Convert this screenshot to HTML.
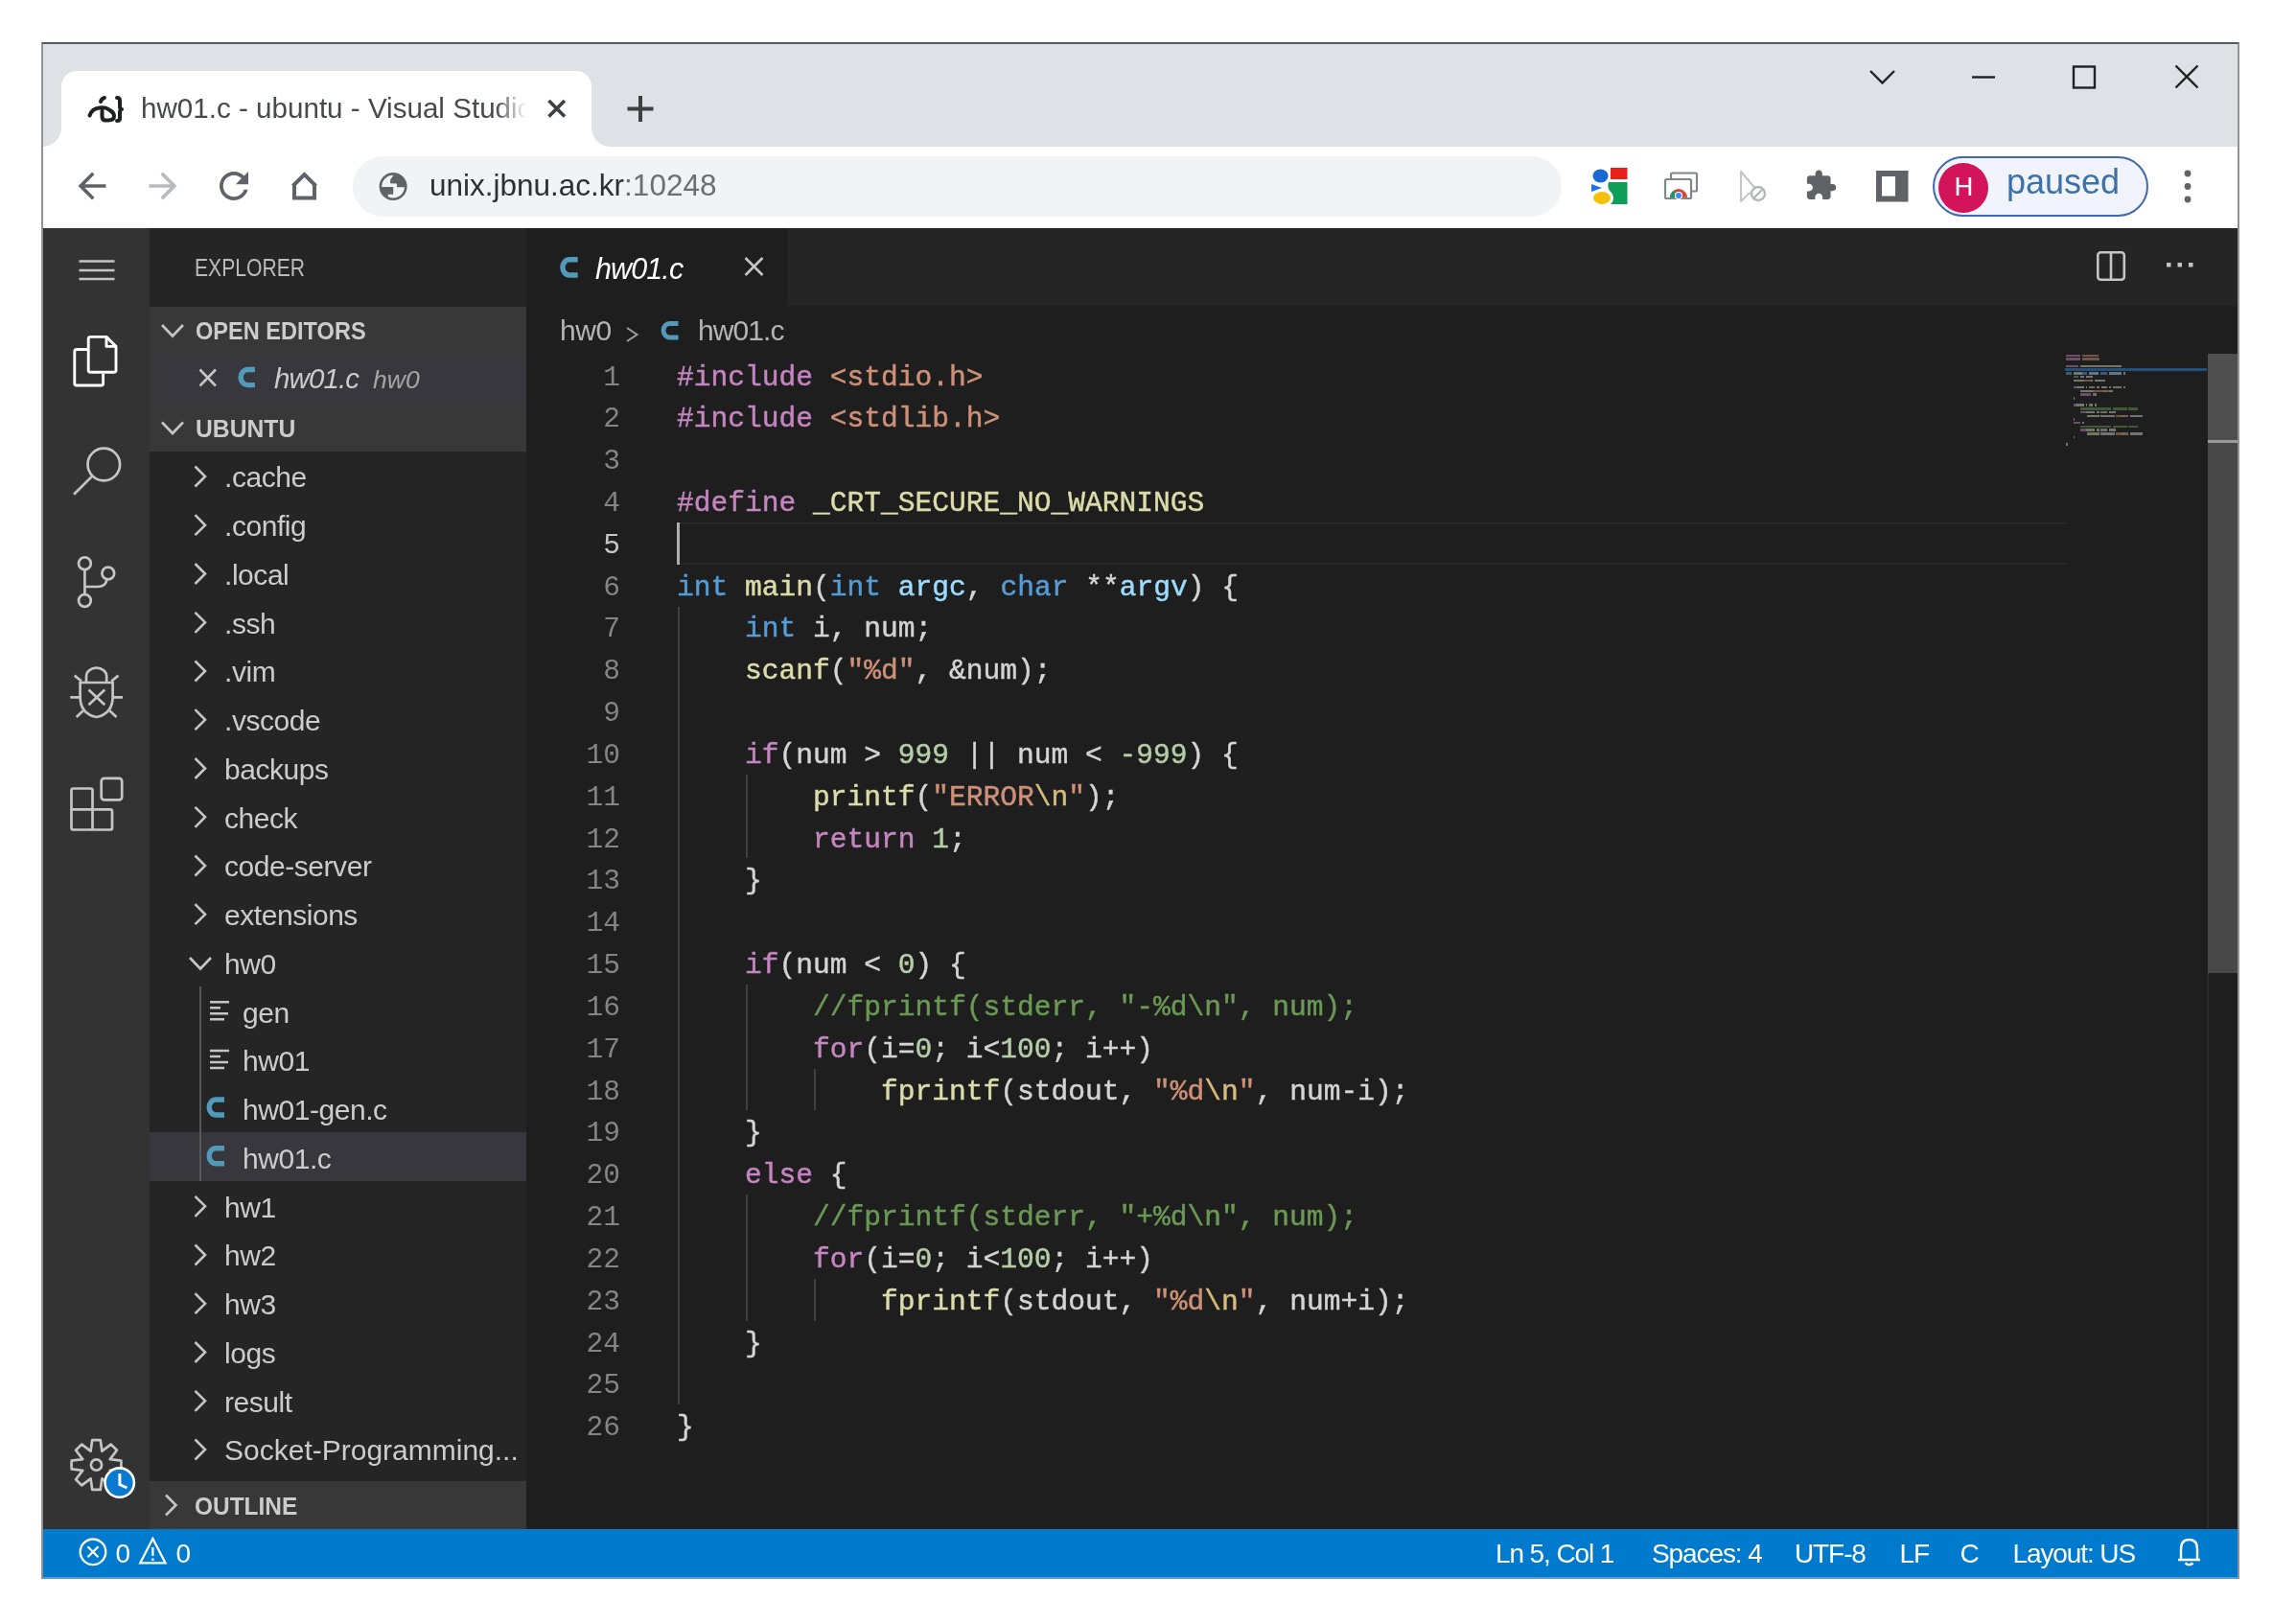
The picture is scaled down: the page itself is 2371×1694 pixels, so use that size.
<!DOCTYPE html>
<html><head><meta charset="utf-8">
<style>
*{box-sizing:border-box;margin:0;padding:0}
html,body{width:2371px;height:1694px;overflow:hidden;background:#fff;font-family:"Liberation Sans",sans-serif}
.a{position:absolute}
#win{position:absolute;left:43px;top:44px;width:2293px;height:1603px;border:2px solid;border-color:#56595d #909294 #5a9ad0 #909294;background:#dee1e6;overflow:hidden}
#blur{position:absolute;left:0;top:0;width:2371px;height:1694px;filter:blur(0.6px)}
/* positions inside are page coords: use wrapper with offset */
#pg{position:absolute;left:-45px;top:-46px;width:2371px;height:1694px}
.t{white-space:pre;line-height:1}
svg{position:absolute;overflow:visible}
</style></head><body>
<div id="blur"><div id="win"><div id="pg">
  <!-- Chrome tab strip -->
  <div class="a" style="left:45px;top:46px;width:2290px;height:107px;background:#dee1e6"></div>
  <!-- active tab -->
  <div class="a" style="left:64px;top:74px;width:553px;height:80px;background:#fff;border-radius:16px 16px 0 0"></div>
  <!-- toolbar -->
  <div class="a" style="left:45px;top:153px;width:2290px;height:85px;background:#fff"></div>
  <!-- omnibox -->
  <div class="a" style="left:368px;top:163px;width:1261px;height:63px;background:#f1f3f4;border-radius:32px"></div>


  <!-- tab bottom flares -->
  <div class="a" style="left:44px;top:133px;width:20px;height:20px;background:radial-gradient(circle at 0 0,#dee1e6 19.5px,#fff 20.5px)"></div>
  <div class="a" style="left:617px;top:133px;width:20px;height:20px;background:radial-gradient(circle at 100% 0,#dee1e6 19.5px,#fff 20.5px)"></div>
  <!-- favicon -->
  <svg style="left:0;top:0" width="1" height="1"><g fill="none" stroke="#1f2023" stroke-width="4" stroke-linecap="round" stroke-linejoin="round">
    <path d="M93.5 120.5 C95 116 99 113 103.5 112.5 C107 112 110 111.5 113 114 C116.5 116 119 117.5 119 121 C119 124.5 116.5 125.5 113 125.5 L110 125.5 C107.5 125.5 106.5 124 106.5 121.5 L106.5 116"/>
    <path d="M105 106 C105.5 104 107 102.5 109 102"/>
    <path d="M122 102 C124 102 125 103 125 105 L125 111.5 C125 113 126 114 127 114 C126 114 125 115 125 116.5 L125 123.5 C125 125 124 126 122 126"/>
  </g></svg>
  <div class="a t" style="left:147px;top:98px;font-size:29.6px;color:#46494d;width:402px;overflow:hidden;-webkit-mask-image:linear-gradient(90deg,#000 370px,transparent 402px)">hw01.c - ubuntu - Visual Studio Code</div>
  <!-- tab close -->
  <svg style="left:0;top:0" width="1" height="1"><path d="M572.5 105 L589 121.5 M589 105 L572.5 121.5" stroke="#3c4043" stroke-width="3.6"/></svg>
  <!-- new tab -->
  <svg style="left:0;top:0" width="1" height="1"><path d="M668 100 V127 M654.5 113.5 H681.5" stroke="#3c4043" stroke-width="4"/></svg>
  <!-- window controls -->
  <svg style="left:0;top:0" width="1" height="1"><g fill="none" stroke="#202124" stroke-width="2.4">
    <path d="M1951 74 L1963.5 86.5 L1976 74"/>
    <path d="M2057 80.5 H2081"/>
    <rect x="2163" y="69.5" width="22" height="22"/>
    <path d="M2269.5 68.5 L2292.5 91.5 M2292.5 68.5 L2269.5 91.5"/>
  </g></svg>
  <!-- back/forward/reload/home -->
  <svg style="left:0;top:0" width="1" height="1">
    <g transform="translate(74.3,172.3) scale(1.81)"><path fill="#5f6368" d="M20 11H7.83l5.59-5.59L12 4l-8 8 8 8 1.41-1.41L7.83 13H20v-2z"/></g>
    <g transform="translate(191.7,172.3) scale(-1.81,1.81)"><path fill="#b8babd" d="M20 11H7.83l5.59-5.59L12 4l-8 8 8 8 1.41-1.41L7.83 13H20v-2z"/></g>
    <g transform="translate(221.5,171.5) scale(1.875)"><path fill="#5f6368" d="M17.65 6.35C16.2 4.9 14.21 4 12 4c-4.42 0-7.99 3.58-7.99 8s3.57 8 7.99 8c3.73 0 6.84-2.55 7.73-6h-2.08c-.82 2.33-3.04 4-5.65 4-3.31 0-6-2.69-6-6s2.69-6 6-6c1.66 0 3.14.69 4.22 1.78L13 11h7V4l-2.35 2.35z"/></g>
    <path d="M305.5 194 L317.5 182 L329.5 194 M307 192 V206.5 H328 V192" fill="none" stroke="#5f6368" stroke-width="4" stroke-linejoin="miter"/>
  </svg>
  <!-- globe -->
  <svg style="left:0;top:0" width="1" height="1">
    <defs><clipPath id="gc"><circle cx="410.1" cy="194.6" r="13"/></clipPath></defs>
    <circle cx="410.1" cy="194.6" r="13.2" fill="none" stroke="#5f6368" stroke-width="2.6"/>
    <g clip-path="url(#gc)" fill="#5f6368">
      <path d="M407.1 191.3 V187.5 L411 182 H426 V195.2 H414 V191.6 Z"/>
      <path d="M395 195 H410.2 V202.7 H404.8 V210 H395 Z"/>
    </g>
  </svg>
  <div class="a t" style="left:448px;top:178px;font-size:31.5px;color:#2d2f33">unix.jbnu.ac.kr<span style="color:#6b6f74">:10248</span></div>
  <!-- extension icons -->
  <svg style="left:0;top:0" width="1" height="1">
    <ellipse cx="1669.5" cy="183.5" rx="8" ry="7" fill="#1967d2"/>
    <rect x="1680" y="175" width="17.5" height="12" fill="#e8221b"/>
    <path d="M1678 190 H1697.5 V213 H1680 C1684 209 1684 204 1680 200 C1677 197 1677 193 1678 190z" fill="#0f9d58"/>
    <path d="M1660 192 L1671 196 L1660 200z" fill="#1a73e8"/>
    <ellipse cx="1671" cy="206.5" rx="9" ry="6.5" fill="#f4c20d"/>
    <rect x="1743" y="180.5" width="27" height="19" rx="1.5" fill="#fff" stroke="#80868b" stroke-width="2.2"/>
    <rect x="1737" y="187" width="27" height="20" rx="1.5" fill="#fff" stroke="#80868b" stroke-width="2.2"/>
    <path d="M1742 206 A9 9 0 0 1 1760 206z" fill="#db4437"/>
    <path d="M1742 206 A9 9 0 0 1 1746 199 L1751 206z" fill="#0f9d58"/>
    <path d="M1755 206 A9 9 0 0 1 1760 206" fill="#f4b400"/>
    <circle cx="1751" cy="204" r="3.5" fill="#4285f4" stroke="#fff" stroke-width="1.2"/>
    <path d="M1816 179 V210 L1824 202 L1833 199 z" fill="none" stroke="#c4c6c9" stroke-width="2.2" stroke-linejoin="round"/>
    <circle cx="1834" cy="202" r="7" fill="#fff" stroke="#b5b7ba" stroke-width="2.4"/>
    <path d="M1829.5 206.5 L1838.5 197.5" stroke="#b5b7ba" stroke-width="2.4"/>
    <g transform="translate(1882,176) scale(1.45)"><path fill="#5f6368" d="M20.5 11H19V7c0-1.1-.9-2-2-2h-4V3.5C13 2.12 11.88 1 10.5 1S8 2.12 8 3.5V5H4c-1.1 0-1.99.9-1.99 2v3.8H3.5c1.49 0 2.7 1.21 2.7 2.7s-1.21 2.7-2.7 2.7H2V20c0 1.1.9 2 2 2h3.8v-1.5c0-1.49 1.21-2.7 2.7-2.7 1.49 0 2.7 1.21 2.7 2.7V22H17c1.1 0 2-.9 2-2v-4h1.5c1.38 0 2.5-1.12 2.5-2.5S21.88 11 20.5 11z"/></g>
    <rect x="1957" y="178" width="33.5" height="32.5" fill="#5f6368"/>
    <rect x="1963" y="184" width="14" height="20.5" fill="#fff"/>
  </svg>
  <!-- profile pill -->
  <div class="a" style="left:2016px;top:163px;width:225px;height:63px;border:2.2px solid #4268ad;border-radius:32px;background:#f1f4fc"></div>
  <div class="a" style="left:2021.5px;top:169.5px;width:52px;height:52px;border-radius:50%;background:#d4145a"></div>
  <div class="a t" style="left:2038.5px;top:181px;font-size:27.5px;color:#fff">H</div>
  <div class="a t" style="left:2093px;top:172px;font-size:36px;color:#3d72a8">paused</div>
  <svg style="left:0;top:0" width="1" height="1"><g fill="#5f6368"><circle cx="2282" cy="181" r="3.4"/><circle cx="2282" cy="194.5" r="3.4"/><circle cx="2282" cy="208" r="3.4"/></g></svg>

  <!-- VS Code -->
  <div class="a" style="left:45px;top:238px;width:2290px;height:1357px;background:#1e1e1e"></div>
  <!-- activity bar -->
  <div class="a" style="left:45px;top:238px;width:111px;height:1357px;background:#333333"></div>
  <!-- sidebar -->
  <div class="a" style="left:156px;top:238px;width:393px;height:1357px;background:#252526"></div>
  <!-- tabs bar -->
  <div class="a" style="left:549px;top:238px;width:1786px;height:81px;background:#252526"></div>
  <div class="a" style="left:549px;top:238px;width:273px;height:81px;background:#1e1e1e"></div>

  <!-- activity bar icons -->
  <svg style="left:0;top:0" width="1" height="1">
    <g stroke="#c5c5c5" stroke-width="2.4"><path d="M82.5 272.5 H119.5 M82.5 282 H119.5 M82.5 291 H119.5"/></g>
    <g fill="none" stroke="#ffffff" stroke-width="2.9" stroke-linejoin="round">
      <path d="M91 364.5 H80 Q77.8 364.5 77.8 366.7 V399.7 Q77.8 402 80 402 H105.5 Q107.6 402 107.6 399.7 V390"/>
      <path d="M92.2 353.5 Q92.2 351.4 94.4 351.4 H111 L121 361.4 V386 Q121 388.3 118.8 388.3 H94.4 Q92.2 388.3 92.2 386 Z" fill="#333333"/>
      <path d="M111 351.4 V361.4 H121"/>
    </g>
    <g fill="none" stroke="#c5c5c5" stroke-width="2.7">
      <circle cx="108.3" cy="484.5" r="16.8"/>
      <path d="M96.2 496.6 L77 515.8"/>
      <!-- git -->
      <circle cx="88.4" cy="587.7" r="6.4"/>
      <circle cx="88.4" cy="626.5" r="6.4"/>
      <circle cx="112.8" cy="598" r="6.4"/>
      <path d="M88.4 594.2 V620 M88.4 612 L102 612 Q110.5 612 111.5 604.4"/>
      <!-- debug -->
      <path d="M90 712 V705.5 A10.6 8.8 0 0 1 111.2 705.5 V712"/>
      <path d="M83.6 712 H117.6 V727 Q117.6 744.5 100.6 748 Q83.6 744.5 83.6 727 Z"/>
      <path d="M92.5 719.5 L109.3 735.2 M109.3 719.5 L92.5 735.2"/>
      <path d="M73.3 727.3 H83.6 M117.6 727.3 H128 M77.7 704.6 L85 710.5 M123.5 704.6 L116.2 710.5 M79.7 748 L86.6 741.6 M121.5 748 L114.6 741.6"/>
      <!-- extensions -->
      <path d="M76.5 822.5 H94.5 Q96.5 822.5 96.5 824.5 V844.3 H115 Q117 844.3 117 846.3 V863.5 Q117 865.5 115 865.5 H76.5 Q74.5 865.5 74.5 863.5 V824.5 Q74.5 822.5 76.5 822.5 Z M74.5 844.3 H96.5 V865.5" stroke-linejoin="round"/>
      <rect x="105.7" y="811.8" width="21.5" height="22.5" rx="3"/>
    </g>
    <!-- gear -->
    <g fill="none" stroke="#c5c5c5" stroke-width="2.7" stroke-linejoin="round">
      <path d="M96.2 1502.1 L104.8 1502.1 L106.4 1513.7 L115.8 1506.6 L121.9 1512.7 L114.8 1522.1 L126.4 1523.7 L126.4 1532.3 L114.8 1533.9 L121.9 1543.3 L115.8 1549.4 L106.4 1542.3 L104.8 1553.9 L96.2 1553.9 L94.6 1542.3 L85.2 1549.4 L79.1 1543.3 L86.2 1533.9 L74.6 1532.3 L74.6 1523.7 L86.2 1522.1 L79.1 1512.7 L85.2 1506.6 L94.6 1513.7Z"/>
      <circle cx="100.5" cy="1528" r="5.6"/>
    </g>
    <circle cx="124.7" cy="1546.6" r="15.2" fill="#0a7ad0" stroke="#ffffff" stroke-width="2.6"/>
    <path d="M124.9 1537 V1548.6 L132.5 1552" fill="none" stroke="#fff" stroke-width="3"/>
  </svg>

<div class="a t" style="left:203.0px;top:266.0px;font-size:26px;color:#bbbbbb;font-weight:normal;font-style:normal;letter-spacing:0px;transform:scaleX(0.812);transform-origin:0 0">EXPLORER</div>
<div class="a" style="left:156px;top:319.5px;width:393px;height:151px;background:#383838;"></div>
<div class="a" style="left:161px;top:370.5px;width:388px;height:50px;background:#37373d;"></div>
<svg style="left:0;top:0" width="1" height="1"><path d="M169.0 339.0 L180.0 350.5 L191.0 339.0" fill="none" stroke="#c5c5c5" stroke-width="2.6"/></svg>
<div class="a t" style="left:203.5px;top:333.2px;font-size:25.5px;color:#cccccc;font-weight:bold;font-style:normal;letter-spacing:0px;transform:scaleX(0.924);transform-origin:0 0">OPEN EDITORS</div>
<svg style="left:0;top:0" width="1" height="1"><path d="M208.5 385.5 L225 402.5 M225 385.5 L208.5 402.5" stroke="#c5c5c5" stroke-width="2.6"/></svg>
<svg style="left:0;top:0" width="1" height="1"><path d="M265.9 385.5 H258.3 A7.2 8.1 0 0 0 251.1 393.6 A7.2 8.1 0 0 0 258.3 401.6 H265.9" fill="none" stroke="#519aba" stroke-width="5.4"/></svg>
<div class="a t" style="left:286.0px;top:380.0px;font-size:29.5px;color:#cccccc;font-weight:normal;font-style:italic;letter-spacing:-0.9px;">hw01.c</div>
<div class="a t" style="left:389.0px;top:382.6px;font-size:26.5px;color:#a6a6a6;font-weight:normal;font-style:italic;letter-spacing:0px;">hw0</div>
<svg style="left:0;top:0" width="1" height="1"><path d="M169.0 440.5 L180.0 452.0 L191.0 440.5" fill="none" stroke="#c5c5c5" stroke-width="2.6"/></svg>
<div class="a t" style="left:203.5px;top:434.0px;font-size:26px;color:#cccccc;font-weight:bold;font-style:normal;letter-spacing:0px;transform:scaleX(0.95);transform-origin:0 0">UBUNTU</div>
<div class="a" style="left:156px;top:1181.0px;width:393px;height:50.75px;background:#37373d;"></div>
<div class="a" style="left:207.5px;top:1028.75px;width:2px;height:203.0px;background:#585858;"></div>
<svg style="left:0;top:0" width="1" height="1"><path d="M203.5 486.5 L214.0 497.0 L203.5 507.5" fill="none" stroke="#c5c5c5" stroke-width="2.6"/></svg>
<div class="a t" style="left:234.0px;top:483.3px;font-size:30px;color:#cccccc;font-weight:normal;font-style:normal;letter-spacing:-0.45px;">.cache</div>
<svg style="left:0;top:0" width="1" height="1"><path d="M203.5 537.2 L214.0 547.8 L203.5 558.2" fill="none" stroke="#c5c5c5" stroke-width="2.6"/></svg>
<div class="a t" style="left:234.0px;top:534.1px;font-size:30px;color:#cccccc;font-weight:normal;font-style:normal;letter-spacing:-0.45px;">.config</div>
<svg style="left:0;top:0" width="1" height="1"><path d="M203.5 588.0 L214.0 598.5 L203.5 609.0" fill="none" stroke="#c5c5c5" stroke-width="2.6"/></svg>
<div class="a t" style="left:234.0px;top:584.8px;font-size:30px;color:#cccccc;font-weight:normal;font-style:normal;letter-spacing:-0.45px;">.local</div>
<svg style="left:0;top:0" width="1" height="1"><path d="M203.5 638.8 L214.0 649.2 L203.5 659.8" fill="none" stroke="#c5c5c5" stroke-width="2.6"/></svg>
<div class="a t" style="left:234.0px;top:635.6px;font-size:30px;color:#cccccc;font-weight:normal;font-style:normal;letter-spacing:-0.45px;">.ssh</div>
<svg style="left:0;top:0" width="1" height="1"><path d="M203.5 689.5 L214.0 700.0 L203.5 710.5" fill="none" stroke="#c5c5c5" stroke-width="2.6"/></svg>
<div class="a t" style="left:234.0px;top:686.3px;font-size:30px;color:#cccccc;font-weight:normal;font-style:normal;letter-spacing:-0.45px;">.vim</div>
<svg style="left:0;top:0" width="1" height="1"><path d="M203.5 740.2 L214.0 750.8 L203.5 761.2" fill="none" stroke="#c5c5c5" stroke-width="2.6"/></svg>
<div class="a t" style="left:234.0px;top:737.1px;font-size:30px;color:#cccccc;font-weight:normal;font-style:normal;letter-spacing:-0.45px;">.vscode</div>
<svg style="left:0;top:0" width="1" height="1"><path d="M203.5 791.0 L214.0 801.5 L203.5 812.0" fill="none" stroke="#c5c5c5" stroke-width="2.6"/></svg>
<div class="a t" style="left:234.0px;top:787.8px;font-size:30px;color:#cccccc;font-weight:normal;font-style:normal;letter-spacing:-0.45px;">backups</div>
<svg style="left:0;top:0" width="1" height="1"><path d="M203.5 841.8 L214.0 852.2 L203.5 862.8" fill="none" stroke="#c5c5c5" stroke-width="2.6"/></svg>
<div class="a t" style="left:234.0px;top:838.6px;font-size:30px;color:#cccccc;font-weight:normal;font-style:normal;letter-spacing:-0.45px;">check</div>
<svg style="left:0;top:0" width="1" height="1"><path d="M203.5 892.5 L214.0 903.0 L203.5 913.5" fill="none" stroke="#c5c5c5" stroke-width="2.6"/></svg>
<div class="a t" style="left:234.0px;top:889.3px;font-size:30px;color:#cccccc;font-weight:normal;font-style:normal;letter-spacing:-0.45px;">code-server</div>
<svg style="left:0;top:0" width="1" height="1"><path d="M203.5 943.2 L214.0 953.8 L203.5 964.2" fill="none" stroke="#c5c5c5" stroke-width="2.6"/></svg>
<div class="a t" style="left:234.0px;top:940.1px;font-size:30px;color:#cccccc;font-weight:normal;font-style:normal;letter-spacing:-0.45px;">extensions</div>
<svg style="left:0;top:0" width="1" height="1"><path d="M198.0 999.0 L209.0 1010.5 L220.0 999.0" fill="none" stroke="#c5c5c5" stroke-width="2.6"/></svg>
<div class="a t" style="left:234.0px;top:990.8px;font-size:30px;color:#cccccc;font-weight:normal;font-style:normal;letter-spacing:-0.45px;">hw0</div>
<svg style="left:0;top:0" width="1" height="1"><g stroke="#c5c5c5" stroke-width="2.4"><path d="M219 1045.2 H239 M219 1051.2 H230 M219 1057.2 H238 M219 1063.2 H234"/></g></svg>
<div class="a t" style="left:253.0px;top:1041.6px;font-size:30px;color:#cccccc;font-weight:normal;font-style:normal;letter-spacing:-0.45px;">gen</div>
<svg style="left:0;top:0" width="1" height="1"><g stroke="#c5c5c5" stroke-width="2.4"><path d="M219 1096.0 H239 M219 1102.0 H230 M219 1108.0 H238 M219 1114.0 H234"/></g></svg>
<div class="a t" style="left:253.0px;top:1092.3px;font-size:30px;color:#cccccc;font-weight:normal;font-style:normal;letter-spacing:-0.45px;">hw01</div>
<svg style="left:0;top:0" width="1" height="1"><path d="M234.0 1147.0 H225.4 A7.2 8.0 0 0 0 218.2 1155.0 A7.2 8.0 0 0 0 225.4 1163.0 H234.0" fill="none" stroke="#519aba" stroke-width="5.4"/></svg>
<div class="a t" style="left:253.0px;top:1143.1px;font-size:30px;color:#cccccc;font-weight:normal;font-style:normal;letter-spacing:-0.45px;">hw01-gen.c</div>
<svg style="left:0;top:0" width="1" height="1"><path d="M234.0 1197.7 H225.4 A7.2 8.0 0 0 0 218.2 1205.8 A7.2 8.0 0 0 0 225.4 1213.8 H234.0" fill="none" stroke="#519aba" stroke-width="5.4"/></svg>
<div class="a t" style="left:253.0px;top:1193.8px;font-size:30px;color:#cccccc;font-weight:normal;font-style:normal;letter-spacing:-0.45px;">hw01.c</div>
<svg style="left:0;top:0" width="1" height="1"><path d="M203.5 1247.8 L214.0 1258.2 L203.5 1268.8" fill="none" stroke="#c5c5c5" stroke-width="2.6"/></svg>
<div class="a t" style="left:234.0px;top:1244.6px;font-size:30px;color:#cccccc;font-weight:normal;font-style:normal;letter-spacing:-0.45px;">hw1</div>
<svg style="left:0;top:0" width="1" height="1"><path d="M203.5 1298.5 L214.0 1309.0 L203.5 1319.5" fill="none" stroke="#c5c5c5" stroke-width="2.6"/></svg>
<div class="a t" style="left:234.0px;top:1295.3px;font-size:30px;color:#cccccc;font-weight:normal;font-style:normal;letter-spacing:-0.45px;">hw2</div>
<svg style="left:0;top:0" width="1" height="1"><path d="M203.5 1349.2 L214.0 1359.8 L203.5 1370.2" fill="none" stroke="#c5c5c5" stroke-width="2.6"/></svg>
<div class="a t" style="left:234.0px;top:1346.1px;font-size:30px;color:#cccccc;font-weight:normal;font-style:normal;letter-spacing:-0.45px;">hw3</div>
<svg style="left:0;top:0" width="1" height="1"><path d="M203.5 1400.0 L214.0 1410.5 L203.5 1421.0" fill="none" stroke="#c5c5c5" stroke-width="2.6"/></svg>
<div class="a t" style="left:234.0px;top:1396.8px;font-size:30px;color:#cccccc;font-weight:normal;font-style:normal;letter-spacing:-0.45px;">logs</div>
<svg style="left:0;top:0" width="1" height="1"><path d="M203.5 1450.8 L214.0 1461.2 L203.5 1471.8" fill="none" stroke="#c5c5c5" stroke-width="2.6"/></svg>
<div class="a t" style="left:234.0px;top:1447.6px;font-size:30px;color:#cccccc;font-weight:normal;font-style:normal;letter-spacing:-0.45px;">result</div>
<svg style="left:0;top:0" width="1" height="1"><path d="M203.5 1501.5 L214.0 1512.0 L203.5 1522.5" fill="none" stroke="#c5c5c5" stroke-width="2.6"/></svg>
<div class="a t" style="left:234.0px;top:1498.3px;font-size:30px;color:#cccccc;font-weight:normal;font-style:normal;letter-spacing:0px;">Socket-Programming...</div>
<div class="a" style="left:156px;top:1544.5px;width:393px;height:51px;background:#383838;"></div>
<svg style="left:0;top:0" width="1" height="1"><path d="M173.0 1559.5 L183.5 1570.0 L173.0 1580.5" fill="none" stroke="#c5c5c5" stroke-width="2.6"/></svg>
<div class="a t" style="left:202.5px;top:1557.7px;font-size:26px;color:#cccccc;font-weight:bold;font-style:normal;letter-spacing:0px;transform:scaleX(0.94);transform-origin:0 0">OUTLINE</div>
<svg style="left:0;top:0" width="1" height="1"><path d="M602.7 270.7 H594.2 A7.3 8.2 0 0 0 586.9 278.9 A7.3 8.2 0 0 0 594.2 287.0 H602.7" fill="none" stroke="#519aba" stroke-width="5.4"/></svg>
<div class="a t" style="left:621.0px;top:265.2px;font-size:30.5px;color:#ffffff;font-weight:normal;font-style:italic;letter-spacing:-0.9px;">hw01.c</div>
<svg style="left:0;top:0" width="1" height="1"><path d="M777.5 269 L795.5 287 M795.5 269 L777.5 287" stroke="#c5c5c5" stroke-width="2.6"/></svg>
<svg style="left:0;top:0" width="1" height="1"><g fill="none" stroke="#c5c5c5" stroke-width="2.6"><rect x="2188.3" y="263.3" width="27.5" height="28.5" rx="3"/><path d="M2202 263.3 V291.8"/></g><g fill="#c5c5c5"><rect x="2260" y="274" width="4.5" height="4.5"/><rect x="2271.5" y="274" width="4.5" height="4.5"/><rect x="2283" y="274" width="4.5" height="4.5"/></g></svg>
<div class="a t" style="left:584.0px;top:330.1px;font-size:30px;color:#b4b4b4;font-weight:normal;font-style:normal;letter-spacing:-0.4px;">hw0</div>
<svg style="left:0;top:0" width="1" height="1"><path d="M654 342 L664.5 349 L654 356" fill="none" stroke="#a0a0a0" stroke-width="2"/></svg>
<svg style="left:0;top:0" width="1" height="1"><path d="M707.5 337.5 H698.5 A6.5 7.2 0 0 0 692.0 344.8 A6.5 7.2 0 0 0 698.5 352.0 H707.5" fill="none" stroke="#519aba" stroke-width="5"/></svg>
<div class="a t" style="left:728.0px;top:330.1px;font-size:30px;color:#b4b4b4;font-weight:normal;font-style:normal;letter-spacing:-0.9px;">hw01.c</div>
<div class="a" style="left:706px;top:544.8px;width:1449px;height:43.8px;border:2px solid #282828;border-right:none"></div>
<div class="a" style="left:706.5px;top:632.5px;width:2px;height:832.8px;background:#404040;"></div>
<div class="a" style="left:777.5px;top:807.8px;width:2px;height:87.7px;background:#404040;"></div>
<div class="a" style="left:777.5px;top:1026.9px;width:2px;height:131.5px;background:#404040;"></div>
<div class="a" style="left:777.5px;top:1246.1px;width:2px;height:131.5px;background:#404040;"></div>
<div class="a" style="left:848.5px;top:1114.6px;width:2px;height:43.8px;background:#404040;"></div>
<div class="a" style="left:848.5px;top:1333.8px;width:2px;height:43.8px;background:#404040;"></div>
<div class="a" style="left:560px;top:372.5px;width:87px;text-align:right;font-family:'Liberation Mono';font-size:29.58px;line-height:43.83px;white-space:pre"><div style="color:#858585">1</div><div style="color:#858585">2</div><div style="color:#858585">3</div><div style="color:#858585">4</div><div style="color:#c6c6c6">5</div><div style="color:#858585">6</div><div style="color:#858585">7</div><div style="color:#858585">8</div><div style="color:#858585">9</div><div style="color:#858585">10</div><div style="color:#858585">11</div><div style="color:#858585">12</div><div style="color:#858585">13</div><div style="color:#858585">14</div><div style="color:#858585">15</div><div style="color:#858585">16</div><div style="color:#858585">17</div><div style="color:#858585">18</div><div style="color:#858585">19</div><div style="color:#858585">20</div><div style="color:#858585">21</div><div style="color:#858585">22</div><div style="color:#858585">23</div><div style="color:#858585">24</div><div style="color:#858585">25</div><div style="color:#858585">26</div></div>
<div class="a" style="left:706.0px;top:372.5px;font-family:'Liberation Mono';font-size:29.58px;letter-spacing:0.002px;line-height:43.83px;white-space:pre;-webkit-text-stroke:0.45px currentColor"><div><span style="color:#c586c0">#include</span><span style="color:#d4d4d4"> </span><span style="color:#ce9178">&lt;stdio.h&gt;</span></div><div><span style="color:#c586c0">#include</span><span style="color:#d4d4d4"> </span><span style="color:#ce9178">&lt;stdlib.h&gt;</span></div><div> </div><div><span style="color:#c586c0">#define</span><span style="color:#d4d4d4"> </span><span style="color:#dcdcaa">_CRT_SECURE_NO_WARNINGS</span></div><div> </div><div><span style="color:#569cd6">int</span><span style="color:#d4d4d4"> </span><span style="color:#dcdcaa">main</span><span style="color:#d4d4d4">(</span><span style="color:#569cd6">int</span><span style="color:#d4d4d4"> </span><span style="color:#9cdcfe">argc</span><span style="color:#d4d4d4">, </span><span style="color:#569cd6">char</span><span style="color:#d4d4d4"> **</span><span style="color:#9cdcfe">argv</span><span style="color:#d4d4d4">) {</span></div><div><span style="color:#d4d4d4">    </span><span style="color:#569cd6">int</span><span style="color:#d4d4d4"> i, num;</span></div><div><span style="color:#d4d4d4">    </span><span style="color:#dcdcaa">scanf</span><span style="color:#d4d4d4">(</span><span style="color:#ce9178">&quot;%d&quot;</span><span style="color:#d4d4d4">, &amp;num);</span></div><div> </div><div><span style="color:#d4d4d4">    </span><span style="color:#c586c0">if</span><span style="color:#d4d4d4">(num &gt; </span><span style="color:#b5cea8">999</span><span style="color:#d4d4d4"> || num &lt; </span><span style="color:#b5cea8">-999</span><span style="color:#d4d4d4">) {</span></div><div><span style="color:#d4d4d4">        </span><span style="color:#dcdcaa">printf</span><span style="color:#d4d4d4">(</span><span style="color:#ce9178">&quot;ERROR</span><span style="color:#d7ba7d">\n</span><span style="color:#ce9178">&quot;</span><span style="color:#d4d4d4">);</span></div><div><span style="color:#d4d4d4">        </span><span style="color:#c586c0">return</span><span style="color:#d4d4d4"> </span><span style="color:#b5cea8">1</span><span style="color:#d4d4d4">;</span></div><div><span style="color:#d4d4d4">    }</span></div><div> </div><div><span style="color:#d4d4d4">    </span><span style="color:#c586c0">if</span><span style="color:#d4d4d4">(num &lt; </span><span style="color:#b5cea8">0</span><span style="color:#d4d4d4">) {</span></div><div><span style="color:#d4d4d4">        </span><span style="color:#6a9955">//fprintf(stderr, &quot;-%d\n&quot;, num);</span></div><div><span style="color:#d4d4d4">        </span><span style="color:#c586c0">for</span><span style="color:#d4d4d4">(i=</span><span style="color:#b5cea8">0</span><span style="color:#d4d4d4">; i&lt;</span><span style="color:#b5cea8">100</span><span style="color:#d4d4d4">; i++)</span></div><div><span style="color:#d4d4d4">            </span><span style="color:#dcdcaa">fprintf</span><span style="color:#d4d4d4">(stdout, </span><span style="color:#ce9178">&quot;%d</span><span style="color:#d7ba7d">\n</span><span style="color:#ce9178">&quot;</span><span style="color:#d4d4d4">, num-i);</span></div><div><span style="color:#d4d4d4">    }</span></div><div><span style="color:#d4d4d4">    </span><span style="color:#c586c0">else</span><span style="color:#d4d4d4"> {</span></div><div><span style="color:#d4d4d4">        </span><span style="color:#6a9955">//fprintf(stderr, &quot;+%d\n&quot;, num);</span></div><div><span style="color:#d4d4d4">        </span><span style="color:#c586c0">for</span><span style="color:#d4d4d4">(i=</span><span style="color:#b5cea8">0</span><span style="color:#d4d4d4">; i&lt;</span><span style="color:#b5cea8">100</span><span style="color:#d4d4d4">; i++)</span></div><div><span style="color:#d4d4d4">            </span><span style="color:#dcdcaa">fprintf</span><span style="color:#d4d4d4">(stdout, </span><span style="color:#ce9178">&quot;%d</span><span style="color:#d7ba7d">\n</span><span style="color:#ce9178">&quot;</span><span style="color:#d4d4d4">, num+i);</span></div><div><span style="color:#d4d4d4">    }</span></div><div> </div><div><span style="color:#d4d4d4">}</span></div></div>
<div class="a" style="left:706px;top:544.8px;width:3px;height:43.8px;background:#aeafad;"></div>
<div class="a" style="left:2154px;top:384.0px;width:148px;height:3.2px;background:#264f78;"></div>
<div class="a" style="left:2155.0px;top:369.6px;width:15.0px;height:2.6px;background:#c586c0;opacity:0.48"></div><div class="a" style="left:2171.8px;top:369.6px;width:16.8px;height:2.6px;background:#ce9178;opacity:0.48"></div><div class="a" style="left:2155.0px;top:373.3px;width:15.0px;height:2.6px;background:#c586c0;opacity:0.48"></div><div class="a" style="left:2171.8px;top:373.3px;width:18.7px;height:2.6px;background:#ce9178;opacity:0.48"></div><div class="a" style="left:2155.0px;top:380.7px;width:13.1px;height:2.6px;background:#c586c0;opacity:0.48"></div><div class="a" style="left:2170.0px;top:380.7px;width:43.0px;height:2.6px;background:#dcdcaa;opacity:0.48"></div><div class="a" style="left:2155.0px;top:388.1px;width:5.6px;height:2.6px;background:#569cd6;opacity:0.48"></div><div class="a" style="left:2162.5px;top:388.1px;width:7.5px;height:2.6px;background:#dcdcaa;opacity:0.48"></div><div class="a" style="left:2170.0px;top:388.1px;width:1.9px;height:2.6px;background:#d4d4d4;opacity:0.48"></div><div class="a" style="left:2171.8px;top:388.1px;width:5.6px;height:2.6px;background:#569cd6;opacity:0.48"></div><div class="a" style="left:2179.3px;top:388.1px;width:7.5px;height:2.6px;background:#9cdcfe;opacity:0.48"></div><div class="a" style="left:2186.8px;top:388.1px;width:1.9px;height:2.6px;background:#d4d4d4;opacity:0.48"></div><div class="a" style="left:2190.5px;top:388.1px;width:7.5px;height:2.6px;background:#569cd6;opacity:0.48"></div><div class="a" style="left:2199.9px;top:388.1px;width:3.7px;height:2.6px;background:#d4d4d4;opacity:0.48"></div><div class="a" style="left:2203.6px;top:388.1px;width:7.5px;height:2.6px;background:#9cdcfe;opacity:0.48"></div><div class="a" style="left:2211.1px;top:388.1px;width:1.9px;height:2.6px;background:#d4d4d4;opacity:0.48"></div><div class="a" style="left:2214.8px;top:388.1px;width:1.9px;height:2.6px;background:#d4d4d4;opacity:0.48"></div><div class="a" style="left:2162.5px;top:391.8px;width:5.6px;height:2.6px;background:#569cd6;opacity:0.48"></div><div class="a" style="left:2170.0px;top:391.8px;width:3.7px;height:2.6px;background:#d4d4d4;opacity:0.48"></div><div class="a" style="left:2175.6px;top:391.8px;width:7.5px;height:2.6px;background:#d4d4d4;opacity:0.48"></div><div class="a" style="left:2162.5px;top:395.5px;width:9.4px;height:2.6px;background:#dcdcaa;opacity:0.48"></div><div class="a" style="left:2171.8px;top:395.5px;width:1.9px;height:2.6px;background:#d4d4d4;opacity:0.48"></div><div class="a" style="left:2173.7px;top:395.5px;width:7.5px;height:2.6px;background:#ce9178;opacity:0.48"></div><div class="a" style="left:2181.2px;top:395.5px;width:1.9px;height:2.6px;background:#d4d4d4;opacity:0.48"></div><div class="a" style="left:2184.9px;top:395.5px;width:11.2px;height:2.6px;background:#d4d4d4;opacity:0.48"></div><div class="a" style="left:2162.5px;top:402.9px;width:3.7px;height:2.6px;background:#c586c0;opacity:0.48"></div><div class="a" style="left:2166.2px;top:402.9px;width:7.5px;height:2.6px;background:#d4d4d4;opacity:0.48"></div><div class="a" style="left:2175.6px;top:402.9px;width:1.9px;height:2.6px;background:#d4d4d4;opacity:0.48"></div><div class="a" style="left:2179.3px;top:402.9px;width:5.6px;height:2.6px;background:#b5cea8;opacity:0.48"></div><div class="a" style="left:2186.8px;top:402.9px;width:3.7px;height:2.6px;background:#d4d4d4;opacity:0.48"></div><div class="a" style="left:2192.4px;top:402.9px;width:5.6px;height:2.6px;background:#d4d4d4;opacity:0.48"></div><div class="a" style="left:2199.9px;top:402.9px;width:1.9px;height:2.6px;background:#d4d4d4;opacity:0.48"></div><div class="a" style="left:2203.6px;top:402.9px;width:7.5px;height:2.6px;background:#b5cea8;opacity:0.48"></div><div class="a" style="left:2211.1px;top:402.9px;width:1.9px;height:2.6px;background:#d4d4d4;opacity:0.48"></div><div class="a" style="left:2214.8px;top:402.9px;width:1.9px;height:2.6px;background:#d4d4d4;opacity:0.48"></div><div class="a" style="left:2170.0px;top:406.6px;width:11.2px;height:2.6px;background:#dcdcaa;opacity:0.48"></div><div class="a" style="left:2181.2px;top:406.6px;width:1.9px;height:2.6px;background:#d4d4d4;opacity:0.48"></div><div class="a" style="left:2183.1px;top:406.6px;width:11.2px;height:2.6px;background:#ce9178;opacity:0.48"></div><div class="a" style="left:2194.3px;top:406.6px;width:3.7px;height:2.6px;background:#d7ba7d;opacity:0.48"></div><div class="a" style="left:2198.0px;top:406.6px;width:1.9px;height:2.6px;background:#ce9178;opacity:0.48"></div><div class="a" style="left:2199.9px;top:406.6px;width:3.7px;height:2.6px;background:#d4d4d4;opacity:0.48"></div><div class="a" style="left:2170.0px;top:410.3px;width:11.2px;height:2.6px;background:#c586c0;opacity:0.48"></div><div class="a" style="left:2183.1px;top:410.3px;width:1.9px;height:2.6px;background:#b5cea8;opacity:0.48"></div><div class="a" style="left:2184.9px;top:410.3px;width:1.9px;height:2.6px;background:#d4d4d4;opacity:0.48"></div><div class="a" style="left:2162.5px;top:414.0px;width:1.9px;height:2.6px;background:#d4d4d4;opacity:0.48"></div><div class="a" style="left:2162.5px;top:421.4px;width:3.7px;height:2.6px;background:#c586c0;opacity:0.48"></div><div class="a" style="left:2166.2px;top:421.4px;width:7.5px;height:2.6px;background:#d4d4d4;opacity:0.48"></div><div class="a" style="left:2175.6px;top:421.4px;width:1.9px;height:2.6px;background:#d4d4d4;opacity:0.48"></div><div class="a" style="left:2179.3px;top:421.4px;width:1.9px;height:2.6px;background:#b5cea8;opacity:0.48"></div><div class="a" style="left:2181.2px;top:421.4px;width:1.9px;height:2.6px;background:#d4d4d4;opacity:0.48"></div><div class="a" style="left:2184.9px;top:421.4px;width:1.9px;height:2.6px;background:#d4d4d4;opacity:0.48"></div><div class="a" style="left:2170.0px;top:425.1px;width:31.8px;height:2.6px;background:#6a9955;opacity:0.48"></div><div class="a" style="left:2203.6px;top:425.1px;width:15.0px;height:2.6px;background:#6a9955;opacity:0.48"></div><div class="a" style="left:2220.4px;top:425.1px;width:9.4px;height:2.6px;background:#6a9955;opacity:0.48"></div><div class="a" style="left:2170.0px;top:428.8px;width:5.6px;height:2.6px;background:#c586c0;opacity:0.48"></div><div class="a" style="left:2175.6px;top:428.8px;width:5.6px;height:2.6px;background:#d4d4d4;opacity:0.48"></div><div class="a" style="left:2181.2px;top:428.8px;width:1.9px;height:2.6px;background:#b5cea8;opacity:0.48"></div><div class="a" style="left:2183.1px;top:428.8px;width:1.9px;height:2.6px;background:#d4d4d4;opacity:0.48"></div><div class="a" style="left:2186.8px;top:428.8px;width:3.7px;height:2.6px;background:#d4d4d4;opacity:0.48"></div><div class="a" style="left:2190.5px;top:428.8px;width:5.6px;height:2.6px;background:#b5cea8;opacity:0.48"></div><div class="a" style="left:2196.1px;top:428.8px;width:1.9px;height:2.6px;background:#d4d4d4;opacity:0.48"></div><div class="a" style="left:2199.9px;top:428.8px;width:7.5px;height:2.6px;background:#d4d4d4;opacity:0.48"></div><div class="a" style="left:2177.4px;top:432.5px;width:13.1px;height:2.6px;background:#dcdcaa;opacity:0.48"></div><div class="a" style="left:2190.5px;top:432.5px;width:15.0px;height:2.6px;background:#d4d4d4;opacity:0.48"></div><div class="a" style="left:2207.4px;top:432.5px;width:5.6px;height:2.6px;background:#ce9178;opacity:0.48"></div><div class="a" style="left:2213.0px;top:432.5px;width:3.7px;height:2.6px;background:#d7ba7d;opacity:0.48"></div><div class="a" style="left:2216.7px;top:432.5px;width:1.9px;height:2.6px;background:#ce9178;opacity:0.48"></div><div class="a" style="left:2218.6px;top:432.5px;width:1.9px;height:2.6px;background:#d4d4d4;opacity:0.48"></div><div class="a" style="left:2222.3px;top:432.5px;width:13.1px;height:2.6px;background:#d4d4d4;opacity:0.48"></div><div class="a" style="left:2162.5px;top:436.2px;width:1.9px;height:2.6px;background:#d4d4d4;opacity:0.48"></div><div class="a" style="left:2162.5px;top:439.9px;width:7.5px;height:2.6px;background:#c586c0;opacity:0.48"></div><div class="a" style="left:2171.8px;top:439.9px;width:1.9px;height:2.6px;background:#d4d4d4;opacity:0.48"></div><div class="a" style="left:2170.0px;top:443.6px;width:31.8px;height:2.6px;background:#6a9955;opacity:0.48"></div><div class="a" style="left:2203.6px;top:443.6px;width:15.0px;height:2.6px;background:#6a9955;opacity:0.48"></div><div class="a" style="left:2220.4px;top:443.6px;width:9.4px;height:2.6px;background:#6a9955;opacity:0.48"></div><div class="a" style="left:2170.0px;top:447.3px;width:5.6px;height:2.6px;background:#c586c0;opacity:0.48"></div><div class="a" style="left:2175.6px;top:447.3px;width:5.6px;height:2.6px;background:#d4d4d4;opacity:0.48"></div><div class="a" style="left:2181.2px;top:447.3px;width:1.9px;height:2.6px;background:#b5cea8;opacity:0.48"></div><div class="a" style="left:2183.1px;top:447.3px;width:1.9px;height:2.6px;background:#d4d4d4;opacity:0.48"></div><div class="a" style="left:2186.8px;top:447.3px;width:3.7px;height:2.6px;background:#d4d4d4;opacity:0.48"></div><div class="a" style="left:2190.5px;top:447.3px;width:5.6px;height:2.6px;background:#b5cea8;opacity:0.48"></div><div class="a" style="left:2196.1px;top:447.3px;width:1.9px;height:2.6px;background:#d4d4d4;opacity:0.48"></div><div class="a" style="left:2199.9px;top:447.3px;width:7.5px;height:2.6px;background:#d4d4d4;opacity:0.48"></div><div class="a" style="left:2177.4px;top:451.0px;width:13.1px;height:2.6px;background:#dcdcaa;opacity:0.48"></div><div class="a" style="left:2190.5px;top:451.0px;width:15.0px;height:2.6px;background:#d4d4d4;opacity:0.48"></div><div class="a" style="left:2207.4px;top:451.0px;width:5.6px;height:2.6px;background:#ce9178;opacity:0.48"></div><div class="a" style="left:2213.0px;top:451.0px;width:3.7px;height:2.6px;background:#d7ba7d;opacity:0.48"></div><div class="a" style="left:2216.7px;top:451.0px;width:1.9px;height:2.6px;background:#ce9178;opacity:0.48"></div><div class="a" style="left:2218.6px;top:451.0px;width:1.9px;height:2.6px;background:#d4d4d4;opacity:0.48"></div><div class="a" style="left:2222.3px;top:451.0px;width:13.1px;height:2.6px;background:#d4d4d4;opacity:0.48"></div><div class="a" style="left:2162.5px;top:454.7px;width:1.9px;height:2.6px;background:#d4d4d4;opacity:0.48"></div><div class="a" style="left:2155.0px;top:462.1px;width:1.9px;height:2.6px;background:#d4d4d4;opacity:0.48"></div>
<div class="a" style="left:2302px;top:1014px;width:2px;height:581px;background:#2b2b2b;"></div>
<div class="a" style="left:2303px;top:369px;width:32px;height:646px;background:#474747;"></div>
<div class="a" style="left:2303px;top:369px;width:32px;height:91px;background:#4f4f4f;"></div>
<div class="a" style="left:2303px;top:459px;width:32px;height:2.5px;background:#9a9a9a;"></div>
<div class="a" style="left:45px;top:1595px;width:2290px;height:51px;background:#007acc;"></div>
<svg style="left:0;top:0" width="1" height="1"><g fill="none" stroke="#fff" stroke-width="2.3"><circle cx="97" cy="1618.8" r="13.3"/><path d="M91.5 1613.3 L102.5 1624.3 M102.5 1613.3 L91.5 1624.3"/><path d="M159.4 1605 L172.5 1630.3 H146.3 Z" stroke-linejoin="miter"/><path d="M159.4 1614 V1623 M159.4 1625.5 V1628"/></g></svg>
<div class="a t" style="left:120.5px;top:1606.6px;font-size:28px;color:#ffffff;font-weight:normal;font-style:normal;letter-spacing:0px;">0</div>
<div class="a t" style="left:183.5px;top:1606.6px;font-size:28px;color:#ffffff;font-weight:normal;font-style:normal;letter-spacing:0px;">0</div>
<div class="a t" style="left:1560.0px;top:1606.6px;font-size:28px;color:#ffffff;font-weight:normal;font-style:normal;letter-spacing:-1.1px;">Ln 5, Col 1</div>
<div class="a t" style="left:1723.0px;top:1606.6px;font-size:28px;color:#ffffff;font-weight:normal;font-style:normal;letter-spacing:-1.1px;">Spaces: 4</div>
<div class="a t" style="left:1872.0px;top:1606.6px;font-size:28px;color:#ffffff;font-weight:normal;font-style:normal;letter-spacing:-1.1px;">UTF-8</div>
<div class="a t" style="left:1981.5px;top:1606.6px;font-size:28px;color:#ffffff;font-weight:normal;font-style:normal;letter-spacing:-1.1px;">LF</div>
<div class="a t" style="left:2044.5px;top:1606.6px;font-size:28px;color:#ffffff;font-weight:normal;font-style:normal;letter-spacing:-1.1px;">C</div>
<div class="a t" style="left:2099.5px;top:1606.6px;font-size:28px;color:#ffffff;font-weight:normal;font-style:normal;letter-spacing:-1.1px;">Layout: US</div>
<svg style="left:0;top:0" width="1" height="1"><path d="M2272 1627 H2295 M2275 1627 V1616 Q2275 1606 2283.5 1606 Q2292 1606 2292 1616 V1627 M2279.5 1630.5 Q2283.5 1634 2287.5 1630.5" fill="none" stroke="#fff" stroke-width="2.4"/></svg>
</div></div></div>
</body></html>
